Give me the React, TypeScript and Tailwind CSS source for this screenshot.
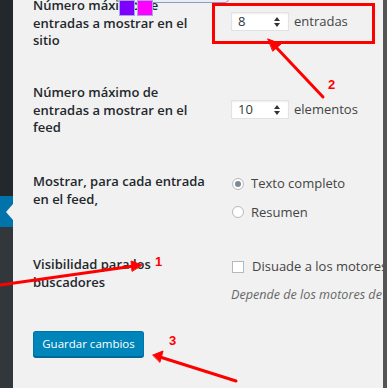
import React from 'react'

const Spinner: React.FC<{ value: string }> = ({ value }) => (
  <div className="flex h-[19px] w-[58px] items-center justify-between border border-[#e2e2e2] bg-white pl-[6px] pr-[8px] shadow-[inset_0_1px_2px_rgba(0,0,0,0.07)]">
    <span className="text-[13px] text-[#32373c]">{value}</span>
    <span className="flex flex-col items-center leading-none text-[#333]">
      <svg width="6" height="4" viewBox="0 0 6 4"><path d="M0 4 L3 0 L6 4 Z" fill="currentColor" /></svg>
      <svg width="6" height="4" viewBox="0 0 6 4" className="mt-[2px]"><path d="M0 0 L3 4 L6 0 Z" fill="currentColor" /></svg>
    </span>
  </div>
)

const Label: React.FC<{ lines: string[] }> = ({ lines }) => (
  <div className="w-[198px] shrink-0 font-semibold leading-[17.5px] text-[#23282d]">
    {lines.map(l => (
      <span key={l} className="block whitespace-nowrap">{l}</span>
    ))}
  </div>
)

const App: React.FC = () => {
  return (
    <div
      className="relative flex h-[388px] w-[387px] overflow-hidden bg-[#f1f1f1] text-[13px] text-[#444]"
      style={{ fontFamily: '"Open Sans", "Liberation Sans", sans-serif' }}
    >
      {/* admin sidebar */}
      <div className="flex w-[13px] shrink-0 flex-col">
        <div className="h-[196px] bg-[#23282d]" />
        <div className="relative h-[31px] bg-[#0073aa]">
          <span className="absolute right-0 top-[8px] h-0 w-0 border-y-[8px] border-r-[7px] border-y-transparent border-r-[#f1f1f1]" />
        </div>
        <div className="flex-1 bg-[#32373c]" />
      </div>

      {/* settings form */}
      <div className="flex flex-1 flex-col pl-[20px]">
        <div className="-mt-[3px] flex h-[87px]">
          <Label lines={['Número máximo de', 'entradas a mostrar en el', 'sitio']} />
          <div className="flex items-center gap-[5px] self-start pt-[15px]">
            <Spinner value="8" />
            <span>entradas</span>
          </div>
        </div>

        <div className="flex h-[89px]">
          <Label lines={['Número máximo de', 'entradas a mostrar en el', 'feed']} />
          <div className="flex items-center gap-[5px] self-start pt-[16px]">
            <Spinner value="10" />
            <span>elementos</span>
          </div>
        </div>

        <div className="flex h-[83px]">
          <Label lines={['Mostrar, para cada entrada', 'en el feed,']} />
          <div className="flex flex-col gap-[9px] pl-[1px] pt-[1px]">
            <label className="flex items-center gap-[7px]">
              <span className="flex h-[12px] w-[12px] items-center justify-center rounded-full border border-[#b4b9be] bg-white">
                <span className="h-[6px] w-[6px] rounded-full bg-[#7e8993]" />
              </span>
              Texto completo
            </label>
            <label className="flex items-center gap-[7px]">
              <span className="h-[12px] w-[12px] rounded-full border border-[#b4b9be] bg-white" />
              Resumen
            </label>
          </div>
        </div>

        <div className="flex h-[75px]">
          <Label lines={['Visibilidad para los', 'buscadores']} />
          <div className="flex flex-col gap-[9px] whitespace-nowrap pt-[1px]">
            <label className="flex items-center gap-[8px] pl-[1px]">
              <span className="h-[12px] w-[12px] border border-[#b4b9be] bg-white" />
              Disuade a los motores de búsqueda
            </label>
            <p className="text-[12.6px] italic text-[#666]">Depende de los motores de búsqueda</p>
          </div>
        </div>

        <div>
          <button className="h-[26px] w-[111px] rounded-[3px] border border-[#0073aa] border-b-[#006799] bg-[#0085ba] text-[11.5px] text-white shadow-[0_1px_0_#006799]">
            Guardar cambios
          </button>
        </div>
      </div>

      {/* right edge */}
      <div className="absolute right-0 top-0 h-full w-[4px] bg-[#555]" />

      {/* tooltip bits at top */}
      <div className="absolute left-[117px] top-[-12px] h-[15px] w-[112px] rounded-[4px] border border-[#8e9cc4] bg-[#e9edf6]" />
      <div className="absolute left-[119px] top-0 h-[16px] w-[16px] border border-[#a6a6f0] bg-[#8000ff]" />
      <div className="absolute left-[137px] top-0 h-[16px] w-[16px] border border-[#a6a6f0] bg-[#ff00ff]" />

      {/* annotations */}
      <div className="absolute left-[212px] top-[3px] h-[41px] w-[163px] border-[3px] border-[#ff0000]" />
      <svg className="pointer-events-none absolute left-0 top-0" width="387" height="388">
        <g stroke="#ff0000" strokeWidth="3" fill="#ff0000" strokeLinecap="round">
          <line x1="323" y1="97" x2="274" y2="45" />
          <path d="M268 39 L281 44 L273 51 Z" strokeWidth="1" />
          <line x1="0" y1="285" x2="134" y2="266" />
          <path d="M142 265 L131 261 L132 271 Z" strokeWidth="1" />
          <line x1="236" y1="381" x2="160" y2="357" />
          <path d="M153 355 L163 351 L160 362 Z" strokeWidth="1" />
        </g>
        <g fill="#ff0000" fontFamily="Liberation Sans, sans-serif" fontWeight="bold" fontSize="13">
          <text x="155" y="266">1</text>
          <text x="328" y="89">2</text>
          <text x="169" y="345">3</text>
        </g>
      </svg>
    </div>
  )
}

export default App
